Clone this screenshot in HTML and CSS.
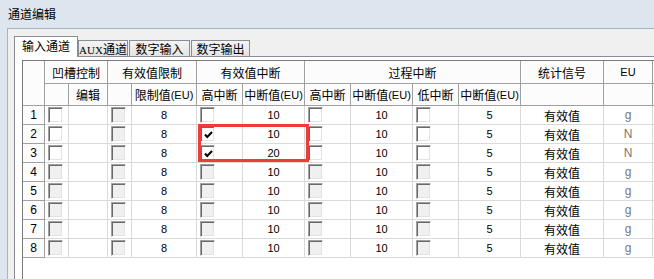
FILE: index.html
```html
<!DOCTYPE html>
<html lang="zh-CN">
<head>
    <meta charset="UTF-8">
    <title>通道编辑</title>
    <link rel="stylesheet" href="styles.css">
</head>
<body>
    <div class="titlebar">通道编辑</div>
    <div class="frame">
        <div class="client">
            <!-- 选项卡 -->
            <div class="tabs">
                <div class="tab active">输入通道</div>
                <div class="tab aux"><span class="latin">AUX</span>通道</div>
                <div class="tab din">数字输入</div>
                <div class="tab dout">数字输出</div>
            </div>

            <div class="panel">
                <div class="grid">
                    <!-- 表头第一行 -->
                    <div class="h rn-h"></div>
                    <div class="h span2">凹槽控制</div>
                    <div class="h span2">有效值限制</div>
                    <div class="h span2">有效值中断</div>
                    <div class="h span4">过程中断</div>
                    <div class="h">统计信号</div>
                    <div class="h num">EU</div>
                    <div class="h"></div>
                    <!-- 表头第二行 -->
                    <div class="h"></div>
                    <div class="h">编辑</div>
                    <div class="h"></div>
                    <div class="h">限制值<span class="num">(EU)</span></div>
                    <div class="h">高中断</div>
                    <div class="h">中断值<span class="num">(EU)</span></div>
                    <div class="h">高中断</div>
                    <div class="h">中断值<span class="num">(EU)</span></div>
                    <div class="h">低中断</div>
                    <div class="h">中断值<span class="num">(EU)</span></div>
                    <div class="h"></div>
                    <div class="h"></div>
                    <div class="h"></div>

                    <!-- 1 -->
                    <div class="rn">1</div>
                    <div class="c cbc"><span class="cb on"></span></div>
                    <div class="c"></div>
                    <div class="c cbc"><span class="cb"></span></div>
                    <div class="c">8</div>
                    <div class="c cbc"><span class="cb on"></span></div>
                    <div class="c">10</div>
                    <div class="c cbc"><span class="cb on"></span></div>
                    <div class="c">10</div>
                    <div class="c cbc"><span class="cb on"></span></div>
                    <div class="c">5</div>
                    <div class="c cjk">有效值</div>
                    <div class="c unit">g</div>
                    <div class="c"></div>

                    <!-- 2 -->
                    <div class="rn">2</div>
                    <div class="c cbc"><span class="cb on"></span></div>
                    <div class="c"></div>
                    <div class="c cbc"><span class="cb"></span></div>
                    <div class="c">8</div>
                    <div class="c cbc"><span class="cb on"><svg width="9" height="8" viewBox="0 0 9 8"><polyline points="1,3.5 3.2,6 8,1" fill="none" stroke="#000" stroke-width="2"/></svg></span></div>
                    <div class="c">10</div>
                    <div class="c cbc"><span class="cb on"></span></div>
                    <div class="c">10</div>
                    <div class="c cbc"><span class="cb on"></span></div>
                    <div class="c">5</div>
                    <div class="c cjk">有效值</div>
                    <div class="c unit">N</div>
                    <div class="c"></div>

                    <!-- 3 -->
                    <div class="rn">3</div>
                    <div class="c cbc"><span class="cb on"></span></div>
                    <div class="c"></div>
                    <div class="c cbc"><span class="cb"></span></div>
                    <div class="c">8</div>
                    <div class="c cbc"><span class="cb on"><svg width="9" height="8" viewBox="0 0 9 8"><polyline points="1,3.5 3.2,6 8,1" fill="none" stroke="#000" stroke-width="2"/></svg></span></div>
                    <div class="c">20</div>
                    <div class="c cbc"><span class="cb on"></span></div>
                    <div class="c">10</div>
                    <div class="c cbc"><span class="cb on"></span></div>
                    <div class="c">5</div>
                    <div class="c cjk">有效值</div>
                    <div class="c unit">N</div>
                    <div class="c"></div>

                    <!-- 4 -->
                    <div class="rn">4</div>
                    <div class="c cbc"><span class="cb"></span></div>
                    <div class="c"></div>
                    <div class="c cbc"><span class="cb"></span></div>
                    <div class="c">8</div>
                    <div class="c cbc"><span class="cb"></span></div>
                    <div class="c">10</div>
                    <div class="c cbc"><span class="cb"></span></div>
                    <div class="c">10</div>
                    <div class="c cbc"><span class="cb"></span></div>
                    <div class="c">5</div>
                    <div class="c cjk">有效值</div>
                    <div class="c unit">g</div>
                    <div class="c"></div>

                    <!-- 5 -->
                    <div class="rn">5</div>
                    <div class="c cbc"><span class="cb"></span></div>
                    <div class="c"></div>
                    <div class="c cbc"><span class="cb"></span></div>
                    <div class="c">8</div>
                    <div class="c cbc"><span class="cb"></span></div>
                    <div class="c">10</div>
                    <div class="c cbc"><span class="cb"></span></div>
                    <div class="c">10</div>
                    <div class="c cbc"><span class="cb"></span></div>
                    <div class="c">5</div>
                    <div class="c cjk">有效值</div>
                    <div class="c unit">g</div>
                    <div class="c"></div>

                    <!-- 6 -->
                    <div class="rn">6</div>
                    <div class="c cbc"><span class="cb"></span></div>
                    <div class="c"></div>
                    <div class="c cbc"><span class="cb"></span></div>
                    <div class="c">8</div>
                    <div class="c cbc"><span class="cb"></span></div>
                    <div class="c">10</div>
                    <div class="c cbc"><span class="cb"></span></div>
                    <div class="c">10</div>
                    <div class="c cbc"><span class="cb"></span></div>
                    <div class="c">5</div>
                    <div class="c cjk">有效值</div>
                    <div class="c unit">g</div>
                    <div class="c"></div>

                    <!-- 7 -->
                    <div class="rn">7</div>
                    <div class="c cbc"><span class="cb"></span></div>
                    <div class="c"></div>
                    <div class="c cbc"><span class="cb"></span></div>
                    <div class="c">8</div>
                    <div class="c cbc"><span class="cb"></span></div>
                    <div class="c">10</div>
                    <div class="c cbc"><span class="cb"></span></div>
                    <div class="c">10</div>
                    <div class="c cbc"><span class="cb"></span></div>
                    <div class="c">5</div>
                    <div class="c cjk">有效值</div>
                    <div class="c unit">g</div>
                    <div class="c"></div>

                    <!-- 8 -->
                    <div class="rn">8</div>
                    <div class="c cbc"><span class="cb"></span></div>
                    <div class="c"></div>
                    <div class="c cbc"><span class="cb"></span></div>
                    <div class="c">8</div>
                    <div class="c cbc"><span class="cb"></span></div>
                    <div class="c">10</div>
                    <div class="c cbc"><span class="cb"></span></div>
                    <div class="c">10</div>
                    <div class="c cbc"><span class="cb"></span></div>
                    <div class="c">5</div>
                    <div class="c cjk">有效值</div>
                    <div class="c unit">g</div>
                    <div class="c"></div>

                    <!-- 红框标注 -->
                    <div class="mark"></div>
                </div>
            </div>
        </div>
    </div>
</body>
</html>
```

FILE: styles.css
```css
html,
body {
    height: 279px;
    overflow: hidden;
}
body {
    margin: 0;
    background-color: #dde5ee;
    font-family: "Noto Sans CJK SC", sans-serif;
    font-size: 12px;
    color: #000;
}
.titlebar {
    height: 28px;
    line-height: 28px;
    padding-left: 8px;
}
.frame {
    padding-left: 7px;
}
.client {
    background-color: #f0f0f0;
    border-top: 1px solid #aab4c0;
    border-left: 1px solid #aab4c0;
    padding: 7px 0 0 6px;
    height: 243px;
    overflow: hidden;
}
.tabs {
    display: flex;
    align-items: flex-end;
    height: 20px;
}
.tab {
    box-sizing: border-box;
    height: 16px;
    border: 1px solid #898c95;
    border-bottom: none;
    background: linear-gradient(#f4f4f4, #e4e4e4);
    text-align: center;
    line-height: 15px;
    white-space: nowrap;
}
.tab.active {
    width: 64px;
    height: 21px;
    line-height: 18px;
    margin-bottom: -1px;
    background: #fff;
    position: relative;
    z-index: 1;
}
.tab.aux {
    width: 50px;
}
.tab.din {
    width: 61px;
    margin-left: 1px;
}
.tab.dout {
    width: 59px;
    margin-left: 1px;
}
.latin {
    font-family: "Liberation Serif", serif;
    font-size: 11px;
}
.panel {
    width: 700px;
    height: 220px;
    border: 1px solid #898c95;
    background-color: #fff;
    padding: 3px 0 0 7px;
}
.grid {
    position: relative;
    display: grid;
    grid-template-columns: 22px 24px 39px 24px 65px 46px 62px 46px 62px 46px 62px 83px 49px 60px;
    grid-template-rows: 23px 22px repeat(8, 19px);
    align-content: start;
    height: 218px;
    border-top: 1px solid #7a7a7a;
    border-left: 1px solid #7a7a7a;
    background-color: #fff;
}
.grid > div {
    box-sizing: border-box;
    display: flex;
    align-items: center;
    justify-content: center;
    white-space: nowrap;
}
.h {
    background-color: #fcfcfc;
    border-right: 1px solid #a0a0a0;
    border-bottom: 1px solid #a0a0a0;
}
.rn-h {
    grid-row: span 2;
}
.span2 {
    grid-column: span 2;
}
.span4 {
    grid-column: span 4;
}
.num,
.rn,
.c {
    font-family: "Liberation Sans", Arial, sans-serif;
    font-size: 11px;
}
.rn {
    background-color: #fcfcfc;
    border-right: 1px solid #a0a0a0;
    border-bottom: 1px solid #a0a0a0;
    font-size: 12px;
}
.c {
    border-right: 1px solid #dadada;
    border-bottom: 1px solid #dadada;
}
.c.cjk {
    font-family: "Noto Sans CJK SC", sans-serif;
    font-size: 12px;
}
.c.unit {
    color: #777;
    font-size: 12px;
}
.grid > .cbc {
    justify-content: flex-start;
    align-items: flex-start;
    padding: 1px 0 0 3px;
}
.cb {
    box-sizing: border-box;
    display: flex;
    align-items: center;
    justify-content: center;
    width: 15px;
    height: 16px;
    border: 1px solid;
    border-color: #a0a0a0 #fff #fff #a0a0a0;
    box-shadow: inset 1px 1px 0 #696969, inset -1px -1px 0 #e3e3e3;
    background-color: #f0f0f0;
}
.cb.on {
    background-color: #fff;
}
.cb svg {
    margin: 1px 0 0 1px;
}
.mark {
    position: absolute;
    left: 175px;
    top: 63px;
    width: 111px;
    height: 38px;
    box-sizing: border-box;
    border: 3px solid #ee3b3b;
}
```
